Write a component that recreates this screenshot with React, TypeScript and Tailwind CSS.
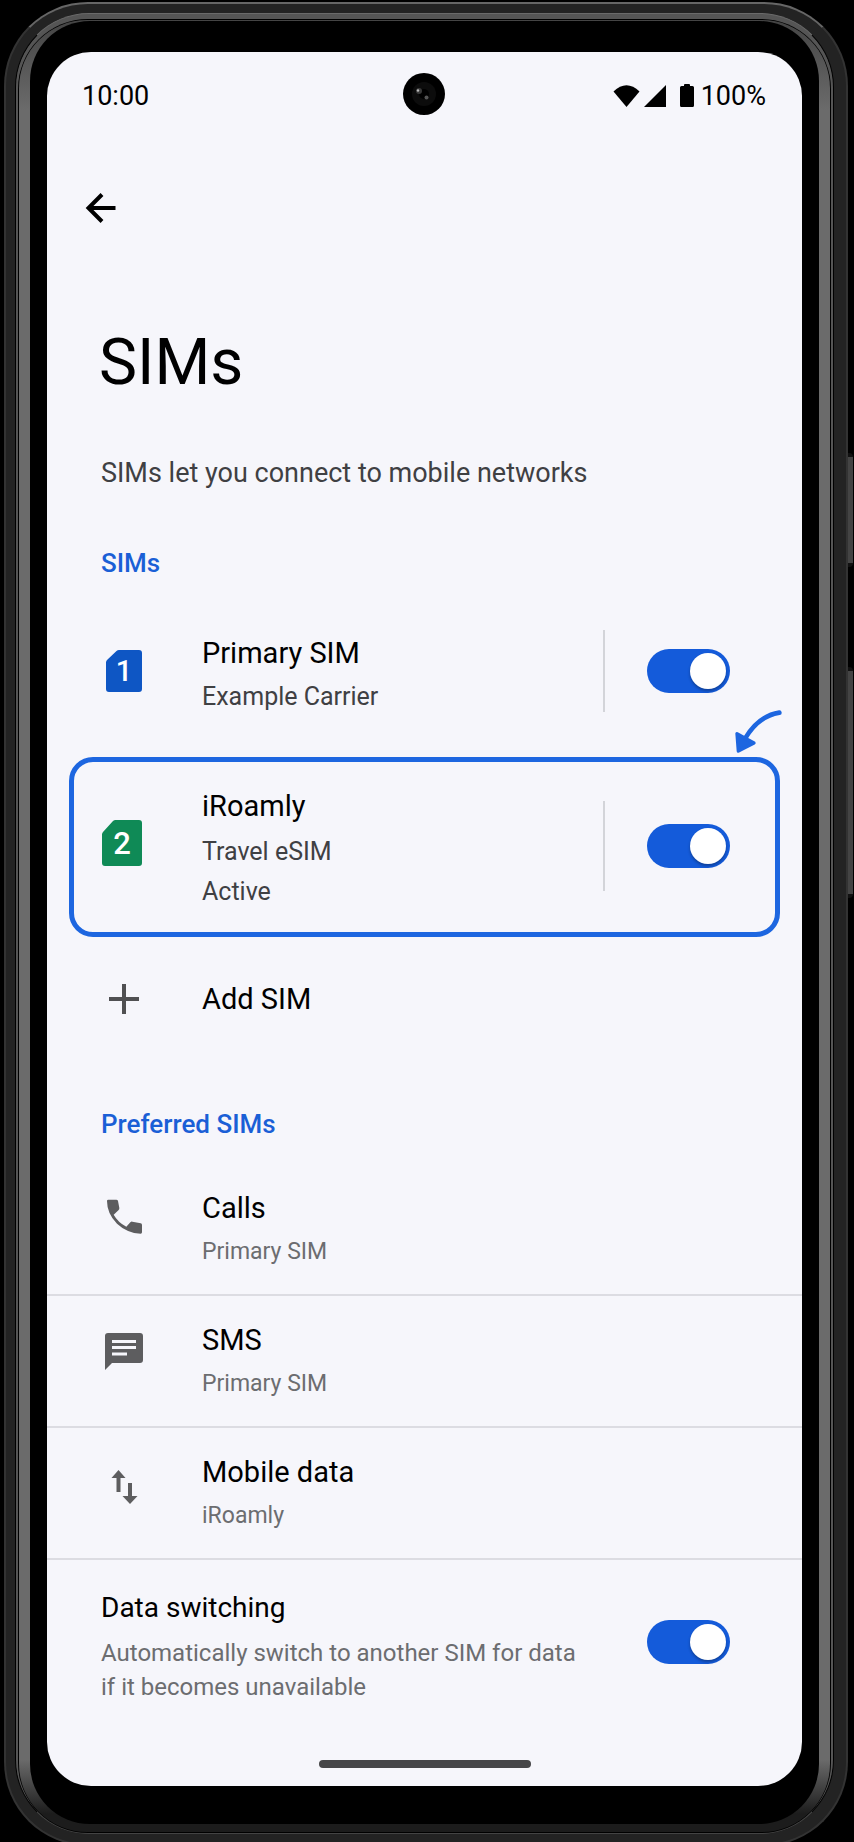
import type { ReactNode } from "react";

type SwitchProps = {
  id: string;
  label: string;
};

function Switch({ id, label }: SwitchProps) {
  return (
    <input
      id={id}
      type="checkbox"
      role="switch"
      aria-label={label}
      defaultChecked
      className="flex h-11 w-[83px] shrink-0 cursor-pointer appearance-none items-center rounded-full bg-slate-400 px-1 before:size-9 before:rounded-full before:bg-white before:shadow-[0_2px_3px_rgba(0,0,0,0.3)] before:content-[''] checked:justify-end checked:bg-[#145bda]"
    />
  );
}

type SimChipProps = {
  number: number;
  large?: boolean;
};

function SimChip({ number, large = false }: SimChipProps) {
  return (
    <svg viewBox={large ? "0 3 48 48" : "0 0 48 48"} className="size-12 shrink-0 overflow-visible" role="img" aria-label={`SIM ${number}`}>
      {large ? (
        <path d="M15.500 1H39a3 3 0 0 1 3 3v40a3 3 0 0 1-3 3H5a3 3 0 0 1-3-3V15.500q0-1.500 1-2.500L13 2q1-1 2.500-1z" fill="#0f8a56" />
      ) : (
        <path d="M19 3h20a3 3 0 0 1 3 3v36a3 3 0 0 1-3 3H9a3 3 0 0 1-3-3V15.500q0-1.500 1-2.500l9.500-9q1-1 2.500-1z" fill="#0e56c4" />
      )}
      <text
        x={large ? 22 : 24}
        y={large ? 35 : 34}
        textAnchor="middle"
        fontSize={large ? 31 : 29}
        fill="#fff"
        fontFamily="Roboto, sans-serif"
        fontWeight={500}
      >
        {number}
      </text>
    </svg>
  );
}

type SimRowProps = {
  id: string;
  name: string;
  details: string[];
  icon: ReactNode;
  highlighted?: boolean;
};

function SimRow({ id, name, details, icon, highlighted = false }: SimRowProps) {
  return (
    <div className="flex items-center">
      {icon}
      <label htmlFor={id} className="ml-[54px] flex-1">
        <span className="block text-[29px] leading-[52px] text-black">{name}</span>
        {details.map((detail) => (
          <span key={detail} className={`block text-[25px] text-[#3f4043] ${highlighted ? "leading-10" : "leading-9"}`}>
            {detail}
          </span>
        ))}
      </label>
      <div className={`mr-[42px] w-0.5 bg-[#d3d4d9] ${highlighted ? "h-[90px]" : "h-[82px]"}`} />
      <Switch id={id} label={name} />
    </div>
  );
}

type PreferenceRowProps = {
  title: string;
  value: string;
  icon: ReactNode;
};

function PreferenceRow({ title, value, icon }: PreferenceRowProps) {
  return (
    <li className="border-b-2 border-[#dcdce2]">
      <button type="button" className="flex w-full items-start pt-[18px] pr-[72px] pb-6 pl-[53px] text-left">
        <span className="mt-3 size-12 shrink-0 text-[#5d5d5f]">{icon}</span>
        <span className="ml-[54px]">
          <span className="block text-[29px] leading-[52px] text-black">{title}</span>
          <span className="block text-[23px] leading-9 text-[#6c6d70]">{value}</span>
        </span>
      </button>
    </li>
  );
}

function CallIcon() {
  return (
    <svg viewBox="-21 -17 144 144" className="size-12" fill="currentColor" aria-hidden="true">
      <path d="M4 0H28Q32 0 33 4L37 25Q37 29 35 31L20 45Q33 68 58 81L70 68Q73 65 76 66L101 71Q105 72 105 76V98Q105 102 101 102Q60 100 30 72Q0 42 0 4Q0 0 4 0Z" />
    </svg>
  );
}

function MessageIcon() {
  return (
    <svg viewBox="0 0 48 48" className="size-12" fill="currentColor" aria-hidden="true">
      <path d="M8 7h32a3 3 0 0 1 3 3v24a3 3 0 0 1-3 3H12l-7 7V10a3 3 0 0 1 3-3z" />
      <path d="M12 15.500h24M12 21.500h24M12 28h15" stroke="#f6f6fb" strokeWidth="3" />
    </svg>
  );
}

function SwapIcon() {
  return (
    <svg viewBox="0 0 48 48" className="size-12" fill="currentColor" aria-hidden="true">
      <path d="M18.500 12l7 8h-5v14h-4V20h-5zM28 25h4v13h5.500l-7.500 8-7.500-8H28z" />
    </svg>
  );
}

function StatusBar() {
  return (
    <header className="grid h-[88px] grid-cols-[1fr_auto_1fr] items-center pr-9 pl-[35px] text-[27px] text-black">
      <time>10:00</time>
      <div className="mb-1 flex size-[42px] items-center justify-center rounded-full bg-black">
        <svg viewBox="0 0 42 42" className="size-full" aria-hidden="true">
          <circle cx="21" cy="21" r="12" fill="#0c0c0c" />
          <circle cx="21" cy="21" r="5" fill="#000" />
          <circle cx="16" cy="18" r="3" fill="#3a3a3a" />
          <circle cx="15" cy="17.500" r="1.200" fill="#bbb" />
          <circle cx="23.500" cy="24.500" r="2" fill="#555" />
        </svg>
      </div>
      <div className="flex items-center justify-end">
        <svg viewBox="0 0 82 24" className="mr-1.5 h-6 w-[82px]" aria-label="Wi-Fi, signal and battery full" role="img">
          <path d="M0.500 7.500Q13.500-5 26.500 7.500L13.500 23z" />
          <path d="M53 1v22H31z" />
          <path d="M71 2V1a1 1 0 0 1 1-1h4a1 1 0 0 1 1 1v1h2.500a1.500 1.500 0 0 1 1.500 1.500v18a1.500 1.500 0 0 1-1.500 1.500h-11a1.500 1.500 0 0 1-1.500-1.500v-18A1.500 1.500 0 0 1 68.500 2z" />
        </svg>
        <span>100%</span>
      </div>
    </header>
  );
}

function SimSettings() {
  return (
    <main className="overflow-hidden rounded-[44px] bg-[#f6f6fb]">
      <StatusBar />

      <button type="button" aria-label="Back" className="mt-11 ml-[30px] flex size-12 items-center justify-center">
        <svg viewBox="0 0 48 48" className="size-12" fill="none" stroke="#000" strokeWidth="4" aria-hidden="true">
          <path d="M38.500 24H12M25 10.500L11.500 24 25 37.500" />
        </svg>
      </button>

      <h1 className="mt-[91px] pl-[52px] text-[64px] leading-[80px] text-black">SIMs</h1>
      <p className="mt-[54px] pl-[54px] text-[27px] leading-8 text-[#3f4043]">SIMs let you connect to mobile networks</p>

      <section>
        <h2 className="mt-[58px] pl-[54px] text-[26px] leading-8 font-medium text-[#1a5fd6]">SIMs</h2>
        <div className="mt-12 pr-[72px] pl-[53px]">
          <SimRow id="sim-1" name="Primary SIM" details={["Example Carrier"]} icon={<SimChip number={1} />} />
        </div>

        <div className="relative mx-[22px] mt-[42px] rounded-3xl border-5 border-[#1d66e0] pt-[18px] pr-[45px] pb-5 pl-[26px]">
          <svg viewBox="0 0 144 129" className="absolute -top-[52px] -right-2 h-[43px] w-12" aria-hidden="true">
            <path d="M133 8Q70 18 30 86" fill="none" stroke="#1d66e0" strokeWidth="14" strokeLinecap="round" />
            <path d="M6 71L10 123 57 99 29 84z" fill="#1d66e0" stroke="#1d66e0" strokeWidth="10" strokeLinejoin="round" />
          </svg>
          <SimRow id="sim-2" name="iRoamly" details={["Travel eSIM", "Active"]} icon={<SimChip number={2} large />} highlighted />
        </div>

        <button type="button" className="mt-9 flex w-full items-center pr-[72px] pl-[53px] text-left">
          <svg viewBox="0 0 48 48" className="size-12" stroke="#505052" strokeWidth="4" aria-hidden="true">
            <path d="M24 9v30M9 24h30" />
          </svg>
          <span className="ml-[54px] text-[29px] leading-[52px] text-black">Add SIM</span>
        </button>
      </section>

      <section>
        <h2 className="mt-[83px] pl-[54px] text-[26px] leading-8 font-medium text-[#1a5fd6]">Preferred SIMs</h2>
        <ul className="mt-6">
          <PreferenceRow title="Calls" value="Primary SIM" icon={<CallIcon />} />
          <PreferenceRow title="SMS" value="Primary SIM" icon={<MessageIcon />} />
          <PreferenceRow title="Mobile data" value="iRoamly" icon={<SwapIcon />} />
        </ul>
      </section>

      <div className="flex items-center justify-between pt-5 pr-[72px] pl-[54px]">
        <label htmlFor="data-switching">
          <span className="block text-[28px] leading-14 text-black">Data switching</span>
          <span className="block max-w-[488px] text-2xl leading-[34px] text-[#6c6d70]">
            Automatically switch to another SIM for data if it becomes unavailable
          </span>
        </label>
        <Switch id="data-switching" label="Data switching" />
      </div>

      <div className="mx-auto mt-14 mb-[18px] h-2 w-[212px] rounded-full bg-[#464648]" />
    </main>
  );
}

export default function App() {
  return (
    <div className="overflow-hidden bg-black pt-0.5 pr-1.5 pl-1 font-[Roboto,sans-serif]">
      {/* metal rim, polished edge and black bezel, from the outside in */}
      <div className="relative -mb-1 rounded-[84px] border-2 border-[#333] border-t-[#666] bg-[#232323] pt-[9px] pr-3 pb-2.5 pl-[9px]">
        <div className="absolute top-[449px] -right-[7px] h-[114px] w-[5px] rounded-r-sm border-y-4 border-[#111] bg-[#444]" />
        <div className="absolute top-[663px] -right-[7px] h-[231px] w-[5px] rounded-r-sm border-y-4 border-[#111] bg-[#444]" />
        <div className="rounded-[74px] border border-x-black border-t-[#6a6a6a] border-b-[#444] bg-[#555] px-0.5 pt-[5px]">
          <div className="rounded-[70px] bg-black p-px">
            <div className="rounded-[68px] bg-[linear-gradient(#444,#6b6b6b_5%,#6b6b6b_96%,#1c1c1c_99%)] px-[11px] pt-px pb-2">
              <div className="rounded-[60px] bg-black px-[17px] pt-[31px] pb-[38px]">
                <SimSettings />
              </div>
            </div>
          </div>
        </div>
      </div>
    </div>
  );
}
